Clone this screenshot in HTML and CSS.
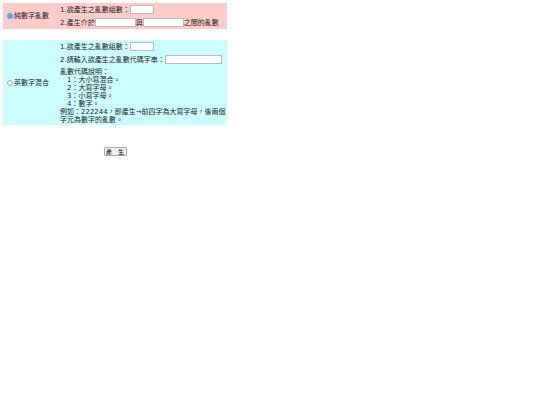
FILE: index.html
```html
<!DOCTYPE html>
<html lang="zh-Hant">
<head>
    <meta charset="UTF-8">
    <meta name="viewport" content="width=device-width, initial-scale=1.0">
    <title>亂數產生</title>
    <link rel="stylesheet" href="styles.css">
</head>
<body>
    <form class="generator">
        <section class="panel numeric">
            <div class="choice">
                <input type="radio" name="mode" id="modeNumber" value="number" checked>
                <label for="modeNumber">純數字亂數</label>
            </div>
            <div class="options">
                <div class="row">
                    <label for="count1">1.欲產生之亂數組數：</label>
                    <input type="text" class="short" id="count1">
                </div>
                <div class="row">
                    <label for="min">2.產生介於</label>
                    <input type="text" class="medium" id="min">
                    <label for="max">與</label>
                    <input type="text" class="medium" id="max">
                    <span>之間的亂數</span>
                </div>
            </div>
        </section>

        <section class="panel mixed">
            <div class="choice">
                <input type="radio" name="mode" id="modeMixed" value="mixed">
                <label for="modeMixed">英數字混合</label>
            </div>
            <div class="options">
                <div class="row">
                    <label for="count2">1.欲產生之亂數組數：</label>
                    <input type="text" class="short" id="count2">
                </div>
                <div class="row">
                    <label for="pattern">2.請輸入欲產生之亂數代碼字串：</label>
                    <input type="text" class="long" id="pattern">
                </div>
                <div class="help">
                    <p>亂數代碼說明：</p>
                    <ul>
                        <li>1：大小寫混合。</li>
                        <li>2：大寫字母。</li>
                        <li>3：小寫字母。</li>
                        <li>4：數字。</li>
                    </ul>
                    <p>例如：222244，即產生→前四字為大寫字母，後兩個字元為數字的亂數。</p>
                </div>
            </div>
        </section>

        <div class="actions">
            <button type="button" class="btn">產　生</button>
        </div>
    </form>
</body>
</html>
```
FILE: styles.css
```css
* {
    margin: 0;
    padding: 0;
    box-sizing: border-box;
}

body {
    padding: 3px;
    background: #fff;
    color: #222;
    font-family: "DejaVu Sans", "Noto Sans CJK TC", sans-serif;
    font-size: 7px;
    line-height: 8px;
}

.generator {
    width: 42%;
    min-width: 224px;
}

.panel {
    display: flex;
    align-items: center;
    margin-bottom: 11px;
}

.numeric {
    background: #ffcccc;
}

.mixed {
    background: #ccffff;
}

.choice {
    display: flex;
    align-items: center;
    flex: 0 0 57px;
    padding-left: 4px;
    gap: 1px;
}

input[type="radio"] {
    appearance: none;
    width: 6px;
    height: 6px;
    border: 1px solid #aaa;
    border-radius: 50%;
    background: #fff;
}

input[type="radio"]:checked {
    border-color: #4a9aff;
    background: #0075ff;
    box-shadow: inset 0 0 0 1px #b5d6ff;
}

.options {
    flex: 1;
}

.row {
    display: flex;
    align-items: center;
    height: 13px;
    white-space: nowrap;
}

input[type="text"] {
    height: 9px;
    border: 1px solid #bbb;
    background: #fff;
    font-family: inherit;
    font-size: 7px;
}

.short {
    width: 24px;
}

.medium {
    width: 41px;
}

.long {
    width: 57px;
}

.help {
    padding: 2px 0 1px;
}

.help ul {
    padding-left: 7px;
    list-style: none;
}

.actions {
    padding-top: 11px;
    text-align: center;
}

.btn {
    width: 23px;
    height: 9px;
    border: 1px solid #aaa;
    border-radius: 1px;
    background: #efefef;
    color: #000;
    font-family: inherit;
    font-size: 6px;
    line-height: 7px;
    white-space: nowrap;
}
```
